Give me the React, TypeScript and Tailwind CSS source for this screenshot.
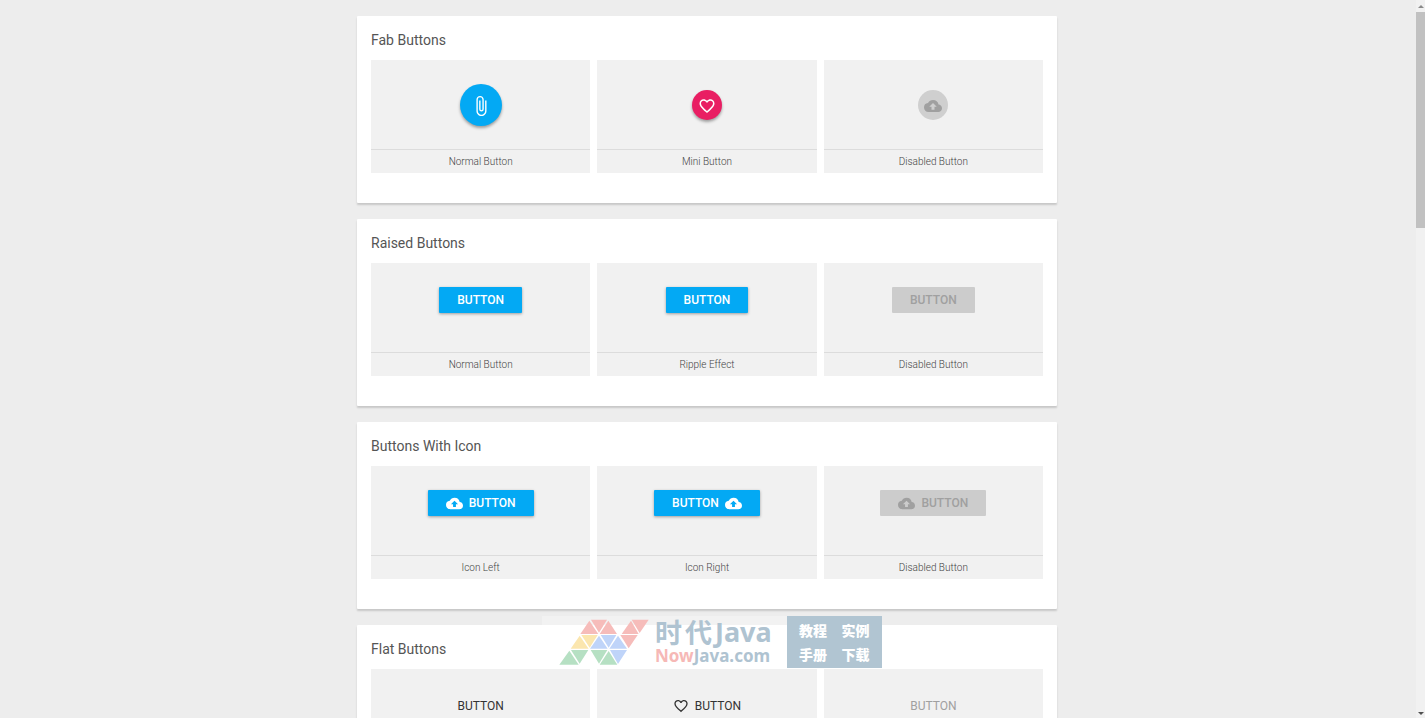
import type { ReactNode } from "react";
import { MdAttachFile, MdBackup, MdFavoriteBorder } from "react-icons/md";

function Panel({ title, children }: { title: string; children: ReactNode }) {
  return (
    <section className="rounded-[1px] bg-white px-3.5 pt-3.5 pb-[30px] shadow-[0_2px_2px_rgba(0,0,0,0.16)]">
      <h2 className="text-[14px] leading-5 text-[#555]">{title}</h2>
      <div className="mt-2.5 grid grid-cols-3 gap-[7px]">{children}</div>
    </section>
  );
}

function Tile({ caption, children }: { caption: string; children: ReactNode }) {
  return (
    <figure className="bg-[#f1f1f1]">
      <div className="flex h-[89px] justify-center pt-6">{children}</div>
      <figcaption className="border-t border-[#dcdcdc] text-center text-[10px] leading-[23px] font-light text-[#444]">
        {caption}
      </figcaption>
    </figure>
  );
}

const raised =
  "flex h-[26px] items-center gap-1.5 rounded-[1px] px-[18px] text-[12px] font-medium uppercase";
const blue = "bg-[#03a9f4] text-white shadow-[0_1px_3px_rgba(0,0,0,0.35)]";
const grey = "bg-[#cccccc] text-[#a0a0a0]";
const flat = "flex h-[26px] items-center gap-1.5 px-[18px] text-[12px] uppercase";

function Triangles({ fill, shapes }: { fill: string; shapes: string[] }) {
  return (
    <g fill={fill}>
      {shapes.map((s) => (
        <polygon key={s} points={s} />
      ))}
    </g>
  );
}

function Logo() {
  return (
    <svg className="h-[46px] w-[90px] shrink-0" viewBox="72 43 270 138" aria-hidden="true">
      <Triangles
        fill="#f6bcba"
        shapes={[
          "163,48 136,88 190,88",
          "168,45 216,45 192,84",
          "220,48 194,88 246,88",
          "288,48 260,88 311,88",
          "290,45 341,45 314,85",
          "256,91 308,91 281,131",
        ]}
      />
      <Triangles fill="#fbe6ae" shapes={["134,93 107,132 161,132", "139,91 188,91 164,129"]} />
      <Triangles
        fill="#bfd4f9"
        shapes={[
          "192,93 165,132 218,132",
          "197,91 244,91 221,129",
          "249,93 223,132 276,132",
          "225,136 276,136 249,178",
        ]}
      />
      <Triangles
        fill="#b6e0c3"
        shapes={[
          "103,138 73,180 131,180",
          "108,136 160,136 134,177",
          "167,136 217,136 192,177",
          "221,139 194,180 247,180",
        ]}
      />
    </svg>
  );
}

function Watermark() {
  return (
    <div className="pointer-events-none absolute top-[616px] left-1/2 -ml-[166px] flex h-[52px] w-[340px] bg-white/30">
      <div className="flex flex-1 items-center pl-[17px]">
        <Logo />
        <div className="ml-1.5 flex flex-col whitespace-nowrap">
          <div className="flex items-center gap-[3px] text-[#afc3d1]">
            <span className="font-['Noto_Sans_CJK_SC',sans-serif] text-[27px] leading-7 font-bold">时</span>
            <span className="font-['Noto_Sans_CJK_SC',sans-serif] text-[27px] leading-7 font-bold">代</span>
            <span className="font-['Noto_Sans',sans-serif] text-[27px] leading-7 font-bold">Java</span>
          </div>
          <div className="font-['Noto_Sans',sans-serif] text-[17px] leading-5 font-bold text-[#afc3d1]">
            <span className="text-[#f6b8b6]">Now</span>Java.com
          </div>
        </div>
      </div>
      <div className="grid w-[95px] grid-cols-2 content-center gap-x-3.5 bg-[#b1c5d2] px-3 font-['Noto_Sans_CJK_SC',sans-serif] text-[14px] leading-6 font-black whitespace-nowrap text-white">
        <span>教程</span>
        <span>实例</span>
        <span>手册</span>
        <span>下载</span>
      </div>
    </div>
  );
}

function ScrollRail() {
  return (
    <div className="flex w-[9px] shrink-0 flex-col items-center bg-[#f1f1f1]" aria-hidden="true">
      <svg className="h-3 w-[9px] shrink-0" viewBox="0 0 9 12">
        <path d="M2 8 5 5l3 3z" fill="#8a8a8a" />
      </svg>
      <div className="h-[216px] w-full bg-[#c1c1c1]" />
      <svg className="mt-auto h-3 w-[9px] shrink-0" viewBox="0 0 9 12">
        <path d="M2 6h6L5 9z" fill="#505050" />
      </svg>
    </div>
  );
}

export default function App() {
  return (
    <div className="flex h-screen overflow-hidden bg-[#ededed] font-[Roboto,sans-serif]">
      <main className="relative min-w-0 flex-1 overflow-hidden pr-0.5">
        <div className="mx-auto flex max-w-[700px] flex-col gap-4 py-4">
          <Panel title="Fab Buttons">
            <Tile caption="Normal Button">
              <button
                aria-label="Attach"
                className="flex size-[42px] items-center justify-center rounded-full bg-[#03a9f4] text-white shadow-[0_2px_3px_rgba(0,0,0,0.35)]"
              >
                <MdAttachFile className="mt-0.5 size-[22px]" />
              </button>
            </Tile>
            <Tile caption="Mini Button">
              <button
                aria-label="Favorite"
                className="mt-1.5 flex size-[30px] items-center justify-center rounded-full bg-[#e91e63] text-white shadow-[0_2px_3px_rgba(0,0,0,0.35)]"
              >
                <MdFavoriteBorder className="mt-0.5 size-[18px]" />
              </button>
            </Tile>
            <Tile caption="Disabled Button">
              <button
                disabled
                aria-label="Upload"
                className="mt-1.5 flex size-[30px] items-center justify-center rounded-full bg-[#cfcfcf] text-[#a0a0a0]"
              >
                <MdBackup className="mt-0.5 size-[18px]" />
              </button>
            </Tile>
          </Panel>

          <Panel title="Raised Buttons">
            <Tile caption="Normal Button">
              <button className={`${raised} ${blue}`}>Button</button>
            </Tile>
            <Tile caption="Ripple Effect">
              <button className={`${raised} ${blue}`}>Button</button>
            </Tile>
            <Tile caption="Disabled Button">
              <button disabled className={`${raised} ${grey}`}>
                Button
              </button>
            </Tile>
          </Panel>

          <Panel title="Buttons With Icon">
            <Tile caption="Icon Left">
              <button className={`${raised} ${blue}`}>
                <MdBackup className="size-[17px]" />
                Button
              </button>
            </Tile>
            <Tile caption="Icon Right">
              <button className={`${raised} ${blue}`}>
                Button
                <MdBackup className="size-[17px]" />
              </button>
            </Tile>
            <Tile caption="Disabled Button">
              <button disabled className={`${raised} ${grey}`}>
                <MdBackup className="size-[17px]" />
                Button
              </button>
            </Tile>
          </Panel>

          <Panel title="Flat Buttons">
            <Tile caption="Normal Button">
              <button className={`${flat} text-[#333]`}>Button</button>
            </Tile>
            <Tile caption="Flat with Icon">
              <button className={`${flat} text-[#333]`}>
                <MdFavoriteBorder className="size-4" />
                Button
              </button>
            </Tile>
            <Tile caption="Disabled Button">
              <button disabled className={`${flat} text-[#a0a0a0]`}>
                Button
              </button>
            </Tile>
          </Panel>
        </div>
        <Watermark />
      </main>
      <ScrollRail />
    </div>
  );
}
